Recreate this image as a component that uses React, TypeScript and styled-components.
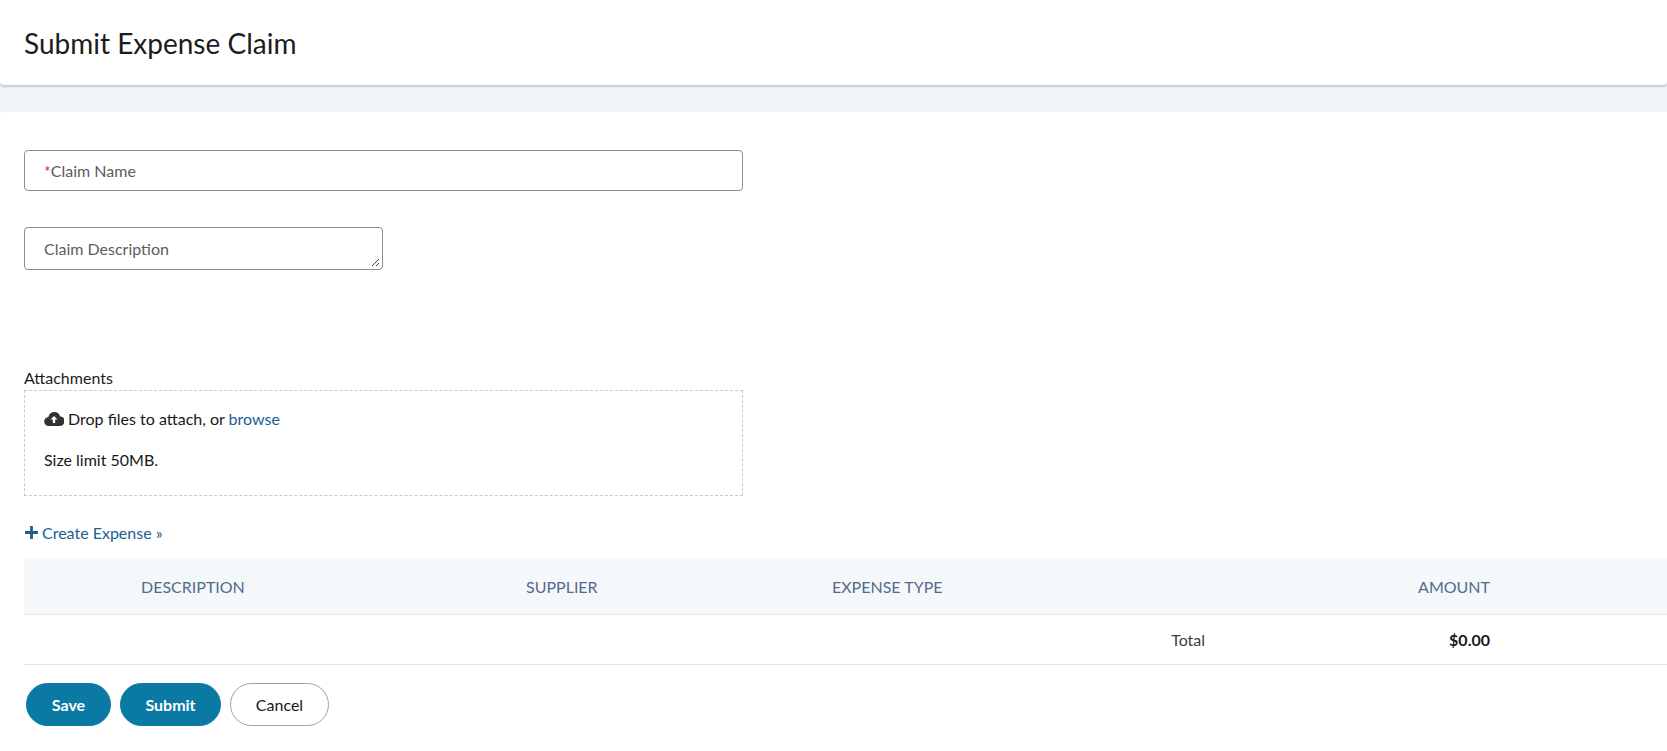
import React from 'react';
import styled, { createGlobalStyle } from 'styled-components';

const GlobalStyle = createGlobalStyle`
  body {
    margin: 0;
    background: #f3f6f9;
    font-family: Lato, "Noto Sans", sans-serif;
    color: #181818;
  }
`;

const Header = styled.div`
  height: 85px;
  background: #fff;
  border-radius: 0 0 4px 4px;
  box-shadow: 0 2px 2px rgba(0, 0, 0, 0.18);
  display: flex;
  align-items: center;
  padding-left: 24px;
`;

const Title = styled.h1`
  margin: 0;
  font-size: 28px;
  font-weight: 400;
  color: #1c1c1c;
`;

const Card = styled.div`
  margin-top: 27px;
  background: #fff;
  border-radius: 4px 0 0 0;
  padding: 38px 0 30px 24px;
  min-height: 600px;
  box-sizing: border-box;
`;

const Field = styled.div<{ $width: number }>`
  width: ${p => p.$width}px;
  height: ${p => (p.$tall ? 43 : 41)}px;
  box-sizing: border-box;
  border: 1px solid #8c8c8c;
  border-radius: 4px;
  display: flex;
  align-items: center;
  padding-left: 19px;
  font-size: 16px;
  color: #5c5c5c;
  position: relative;
` as any;

const Req = styled.span`
  color: #c23934;
`;

const Grip = styled.svg`
  position: absolute;
  right: 2px;
  bottom: 2px;
`;

const Label = styled.div`
  margin-top: 98px;
  font-size: 16px;
  color: #1c1c1c;
  margin-bottom: 3px;
`;

const Drop = styled.div`
  width: 719px;
  height: 106px;
  box-sizing: border-box;
  border: 1px dashed #c9c9c9;
  padding: 18px 19px;
  font-size: 16px;
  display: flex;
  flex-direction: column;
  gap: 22px;
`;

const DropLine = styled.div`
  display: flex;
  align-items: center;
  gap: 4px;
`;

const Link = styled.span`
  color: #1b5e91;
`;

const CreateLink = styled.div`
  margin-top: 27px;
  display: flex;
  align-items: center;
  gap: 3px;
  font-size: 16px;
  color: #1b5e91;
`;

const HeadRow = styled.div`
  margin-top: 16px;
  height: 56px;
  background: #f5f8fa;
  border-bottom: 1px solid #e5e5e5;
  display: grid;
  grid-template-columns: 117px 385px 306px 1fr;
  align-items: center;
  font-size: 16px;
  color: #54698d;
  text-transform: uppercase;
`;

const HeadCell = styled.div<{ $right?: boolean }>`
  text-align: ${p => (p.$right ? 'right' : 'left')};
  padding-right: ${p => (p.$right ? 177 : 0)}px;
`;

const TotalRow = styled.div`
  height: 49px;
  border-bottom: 1px solid #e5e5e5;
  display: flex;
  justify-content: flex-end;
  align-items: center;
  padding-right: 177px;
  font-size: 16px;
`;

const TotalLabel = styled.span`
  margin-right: 244px;
  color: #3e3e3c;
`;

const Amount = styled.span`
  font-weight: 700;
`;

const Actions = styled.div`
  margin-top: 18px;
  display: flex;
  gap: 9px;
  padding-left: 2px;
`;

const Button = styled.button<{ $brand?: boolean; $w: number }>`
  width: ${p => p.$w}px;
  height: 43px;
  border-radius: 22px;
  font-family: inherit;
  font-size: 16px;
  font-weight: ${p => (p.$brand ? 700 : 400)};
  background: ${p => (p.$brand ? '#0a7aa4' : '#fff')};
  color: ${p => (p.$brand ? '#fff' : '#181818')};
  border: 1px solid ${p => (p.$brand ? '#0a7aa4' : '#a0a0a0')};
`;

export default function App() {
  return (
    <>
      <GlobalStyle />
      <Header>
        <Title>Submit Expense Claim</Title>
      </Header>
      <Card>
        <Field $width={719}>
          <Req>*</Req>Claim Name
        </Field>
        <div style={{ height: 36 }} />
        <Field $width={359} $tall>
          Claim Description
          <Grip width="10" height="10" viewBox="0 0 10 10">
            <path d="M9 2L2 9M9 6L6 9" stroke="#444" strokeWidth="1" />
          </Grip>
        </Field>
        <Label>Attachments</Label>
        <Drop>
          <DropLine>
            <svg width="20" height="16" viewBox="0 0 20 16">
              <path d="M5 15a4.5 4.5 0 0 1-.6-9A6 6 0 0 1 16 5.2 4.9 4.9 0 0 1 15.5 15z" fill="#333" />
              <path d="M10 5l-3.5 3.5h2.3V12h2.4V8.5h2.3z" fill="#fff" />
            </svg>
            <span>
              Drop files to attach, or <Link>browse</Link>
            </span>
          </DropLine>
          <div>Size limit 50MB.</div>
        </Drop>
        <CreateLink>
          <svg width="15" height="15" viewBox="0 0 14 14">
            <path d="M7 1v12M1 7h12" stroke="#1b5e91" strokeWidth="2.6" />
          </svg>
          Create Expense »
        </CreateLink>
        <HeadRow>
          <div />
          <HeadCell>Description</HeadCell>
          <HeadCell>Supplier</HeadCell>
          <HeadCell style={{ display: 'flex', justifyContent: 'space-between' }}>
            <span>Expense Type</span>
            <span style={{ paddingRight: 177 }}>Amount</span>
          </HeadCell>
        </HeadRow>
        <TotalRow>
          <TotalLabel>Total</TotalLabel>
          <Amount>$0.00</Amount>
        </TotalRow>
        <Actions>
          <Button $brand $w={85}>Save</Button>
          <Button $brand $w={101}>Submit</Button>
          <Button $w={99}>Cancel</Button>
        </Actions>
      </Card>
    </>
  );
}
